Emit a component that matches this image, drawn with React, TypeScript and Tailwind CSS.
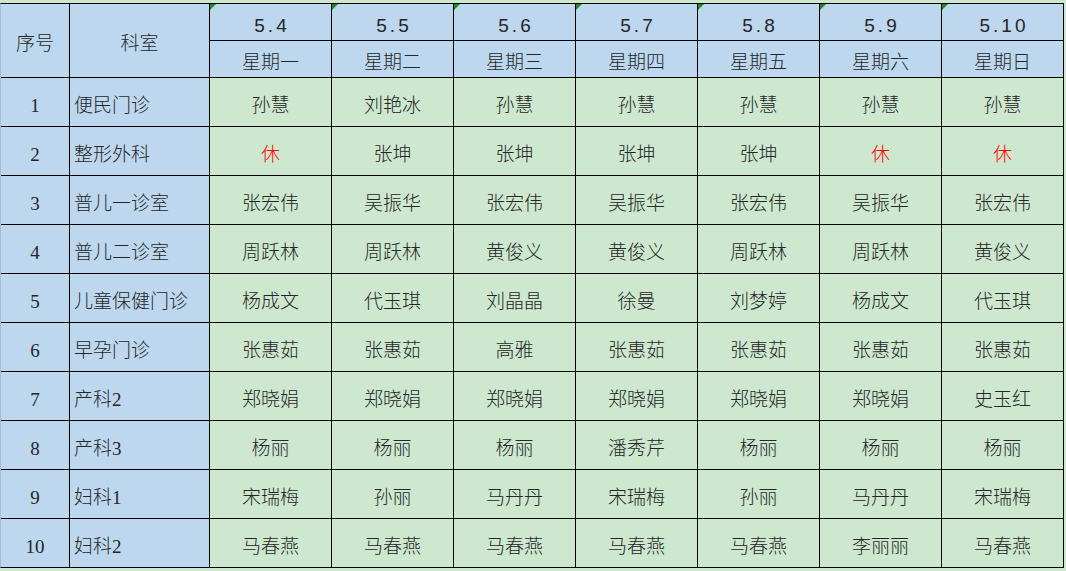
import React from 'react';

const dates = ['5.4', '5.5', '5.6', '5.7', '5.8', '5.9', '5.10'];
const weekdays = ['星期一', '星期二', '星期三', '星期四', '星期五', '星期六', '星期日'];

const rows: { dept: string; staff: string[] }[] = [
  { dept: '便民门诊', staff: ['孙慧', '刘艳冰', '孙慧', '孙慧', '孙慧', '孙慧', '孙慧'] },
  { dept: '整形外科', staff: ['休', '张坤', '张坤', '张坤', '张坤', '休', '休'] },
  { dept: '普儿一诊室', staff: ['张宏伟', '吴振华', '张宏伟', '吴振华', '张宏伟', '吴振华', '张宏伟'] },
  { dept: '普儿二诊室', staff: ['周跃林', '周跃林', '黄俊义', '黄俊义', '周跃林', '周跃林', '黄俊义'] },
  { dept: '儿童保健门诊', staff: ['杨成文', '代玉琪', '刘晶晶', '徐曼', '刘梦婷', '杨成文', '代玉琪'] },
  { dept: '早孕门诊', staff: ['张惠茹', '张惠茹', '高雅', '张惠茹', '张惠茹', '张惠茹', '张惠茹'] },
  { dept: '产科2', staff: ['郑晓娟', '郑晓娟', '郑晓娟', '郑晓娟', '郑晓娟', '郑晓娟', '史玉红'] },
  { dept: '产科3', staff: ['杨丽', '杨丽', '杨丽', '潘秀芹', '杨丽', '杨丽', '杨丽'] },
  { dept: '妇科1', staff: ['宋瑞梅', '孙丽', '马丹丹', '宋瑞梅', '孙丽', '马丹丹', '宋瑞梅'] },
  { dept: '妇科2', staff: ['马春燕', '马春燕', '马春燕', '马春燕', '马春燕', '李丽丽', '马春燕'] },
];

const font = { fontFamily: '"Liberation Serif", "Noto Sans CJK SC", serif' };

export default function App() {
  return (
    <div className="w-[1066px] h-[571px] bg-[#cde8cf] pt-[3px] text-[19px] font-light text-[#262626]" style={font}>
      <div className="grid w-[1064px] grid-cols-[68px_139px_repeat(7,121px)] grid-rows-[36px_36px_repeat(10,48px)] gap-px bg-black border-t border-r border-b border-black border-l border-l-[#a6bdd6]">
        {/* Header */}
        <div className="row-span-2 bg-[#bdd7ee] flex items-center justify-center pt-2">序号</div>
        <div className="row-span-2 bg-[#bdd7ee] flex items-center justify-center pt-2">科室</div>
        {dates.map((d) => (
          <div key={d} className="relative bg-[#bdd7ee] flex items-center justify-center pt-2">
            <span className="tracking-[3px] pl-[3px]" style={{ fontFamily: '"Liberation Sans", sans-serif' }}>
              {d}
            </span>
            <div className="absolute left-0 top-0 w-0 h-0 border-t-[6px] border-r-[6px] border-t-[#1e8a1e] border-r-transparent" />
          </div>
        ))}
        {weekdays.map((w) => (
          <div key={w} className="bg-[#bdd7ee] flex items-center justify-center pt-2">
            {w}
          </div>
        ))}

        {/* Body */}
        {rows.map((r, i) => (
          <React.Fragment key={r.dept}>
            <div className="bg-[#bdd7ee] flex items-center justify-center pt-2">{i + 1}</div>
            <div className="bg-[#bdd7ee] flex items-center pl-1 pt-2">{r.dept}</div>
            {r.staff.map((s, j) => (
              <div
                key={j}
                className={`bg-[#cde8cf] flex items-center justify-center pt-2 ${s === '休' ? 'text-[#ff0000]' : ''}`}
              >
                {s}
              </div>
            ))}
          </React.Fragment>
        ))}
      </div>
    </div>
  );
}
